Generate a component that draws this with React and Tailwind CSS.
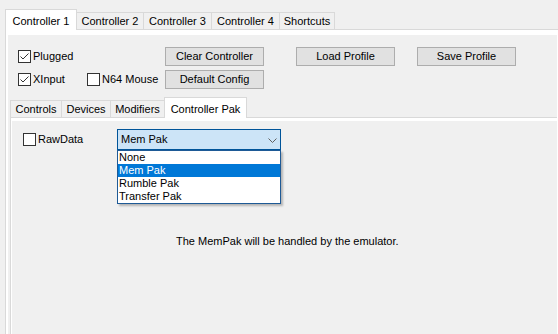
import React from 'react';

const Check = ({ checked, label, className = '' }) => (
  <div className={`flex items-center ${className}`}>
    <span className="w-[13px] h-[13px] border border-[#333333] bg-white flex items-center justify-center shrink-0">
      {checked && (
        <svg width="11" height="11" viewBox="0 0 11 11">
          <path d="M1.5 5.5 L4 8 L9.5 2.5" stroke="#333333" fill="none" strokeWidth="1" />
        </svg>
      )}
    </span>
    <span className="ml-[2px] leading-[13px]">{label}</span>
  </div>
);

const Button = ({ children, className = '' }) => (
  <div
    className={`w-[99px] h-[19px] bg-[#e1e1e1] border border-[#adadad] flex items-center justify-center leading-none ${className}`}
  >
    {children}
  </div>
);

const Tab = ({ label, width, selected, first }) => {
  if (selected) {
    return (
      <div
        className={`relative z-10 -mb-px h-[21px] bg-white border-l border-t border-r border-[#d9d9d9] flex items-start justify-center pt-[3px] ${width}`}
      >
        {label}
      </div>
    );
  }
  return (
    <div
      className={`h-[17px] bg-[#f0f0f0] border-t border-r border-[#d9d9d9] flex items-center justify-center ${first ? 'border-l' : ''} ${width}`}
    >
      {label}
    </div>
  );
};

const paks = ['None', 'Mem Pak', 'Rumble Pak', 'Transfer Pak'];

export default function App() {
  return (
    <div className="w-[558px] h-[334px] overflow-hidden bg-[#f0f0f0] text-[11px] text-black font-['Liberation_Sans',Arial,sans-serif]">
      {/* top tabs */}
      <div className="flex items-end h-[29px] pl-[5px]">
        <Tab label="Controller 1" width="w-[72px]" selected />
        <Tab label="Controller 2" width="w-[67px]" />
        <Tab label="Controller 3" width="w-[68px]" />
        <Tab label="Controller 4" width="w-[68px]" />
        <Tab label="Shortcuts" width="w-[55px]" />
      </div>

      {/* outer pane */}
      <div className="ml-[5px] w-[560px] h-[305px] border-l border-t border-[#d9d9d9] bg-white pt-[5px] pl-[2px]">
        <div className="w-[549px] h-[300px] bg-[#f0f0f0] pt-[12px]">
          <div className="flex items-center h-[19px]">
            <div className="w-[157px] pl-[10px]">
              <Check checked label="Plugged" />
            </div>
            <Button>Clear Controller</Button>
            <Button className="ml-[32px]">Load Profile</Button>
            <Button className="ml-[22px]">Save Profile</Button>
          </div>
          <div className="flex items-center h-[19px] mt-[4px]">
            <div className="w-[157px] pl-[10px] flex items-center">
              <Check checked label="XInput" className="w-[69px]" />
              <Check label="N64 Mouse" />
            </div>
            <Button>Default Config</Button>
          </div>

          {/* inner tabs */}
          <div className="mt-[8px] ml-[2px]">
            <div className="flex items-end h-[20px]">
              <Tab label="Controls" width="w-[52px]" first />
              <Tab label="Devices" width="w-[49px]" />
              <div className="h-[17px] w-[53px] border-t border-[#d9d9d9] flex items-center justify-center">
                Modifiers
              </div>
              <Tab label="Controller Pak" width="w-[83px]" selected />
            </div>
            <div className="border-l border-t border-[#d9d9d9] bg-white pt-[3px] pl-[1px] h-[220px]">
              <div className="bg-[#f0f0f0] h-full pt-[8px]">
                <div className="flex items-start">
                  <div className="w-[105px] pl-[11px] pt-[4px]">
                    <Check label="RawData" />
                  </div>
                  <div className="relative w-[164px] h-[21px] bg-[#cce4f7] border border-[#005499] flex items-center pl-[3px]">
                    <span>Mem Pak</span>
                    <svg
                      className="absolute right-[3px] top-[8px]"
                      width="9"
                      height="5"
                      viewBox="0 0 9 5"
                    >
                      <path d="M0.5 0.5 L4.5 4.5 L8.5 0.5" stroke="#606060" fill="none" strokeWidth="1" />
                    </svg>
                    <div className="absolute left-[-1px] top-[20px] w-[164px] bg-white border border-[#1e5a96] shadow-[2px_2px_2px_rgba(0,0,0,0.25)] z-20">
                      {paks.map((p) => (
                        <div
                          key={p}
                          className={`h-[13px] leading-[13px] pl-[1px] ${p === 'Mem Pak' ? 'bg-[#0078d7] text-white' : ''}`}
                        >
                          {p}
                        </div>
                      ))}
                    </div>
                  </div>
                </div>
                <div className="mt-[85px] pl-[164px] leading-[13px]">
                  The MemPak will be handled by the emulator.
                </div>
              </div>
            </div>
          </div>
        </div>
      </div>
    </div>
  );
}
